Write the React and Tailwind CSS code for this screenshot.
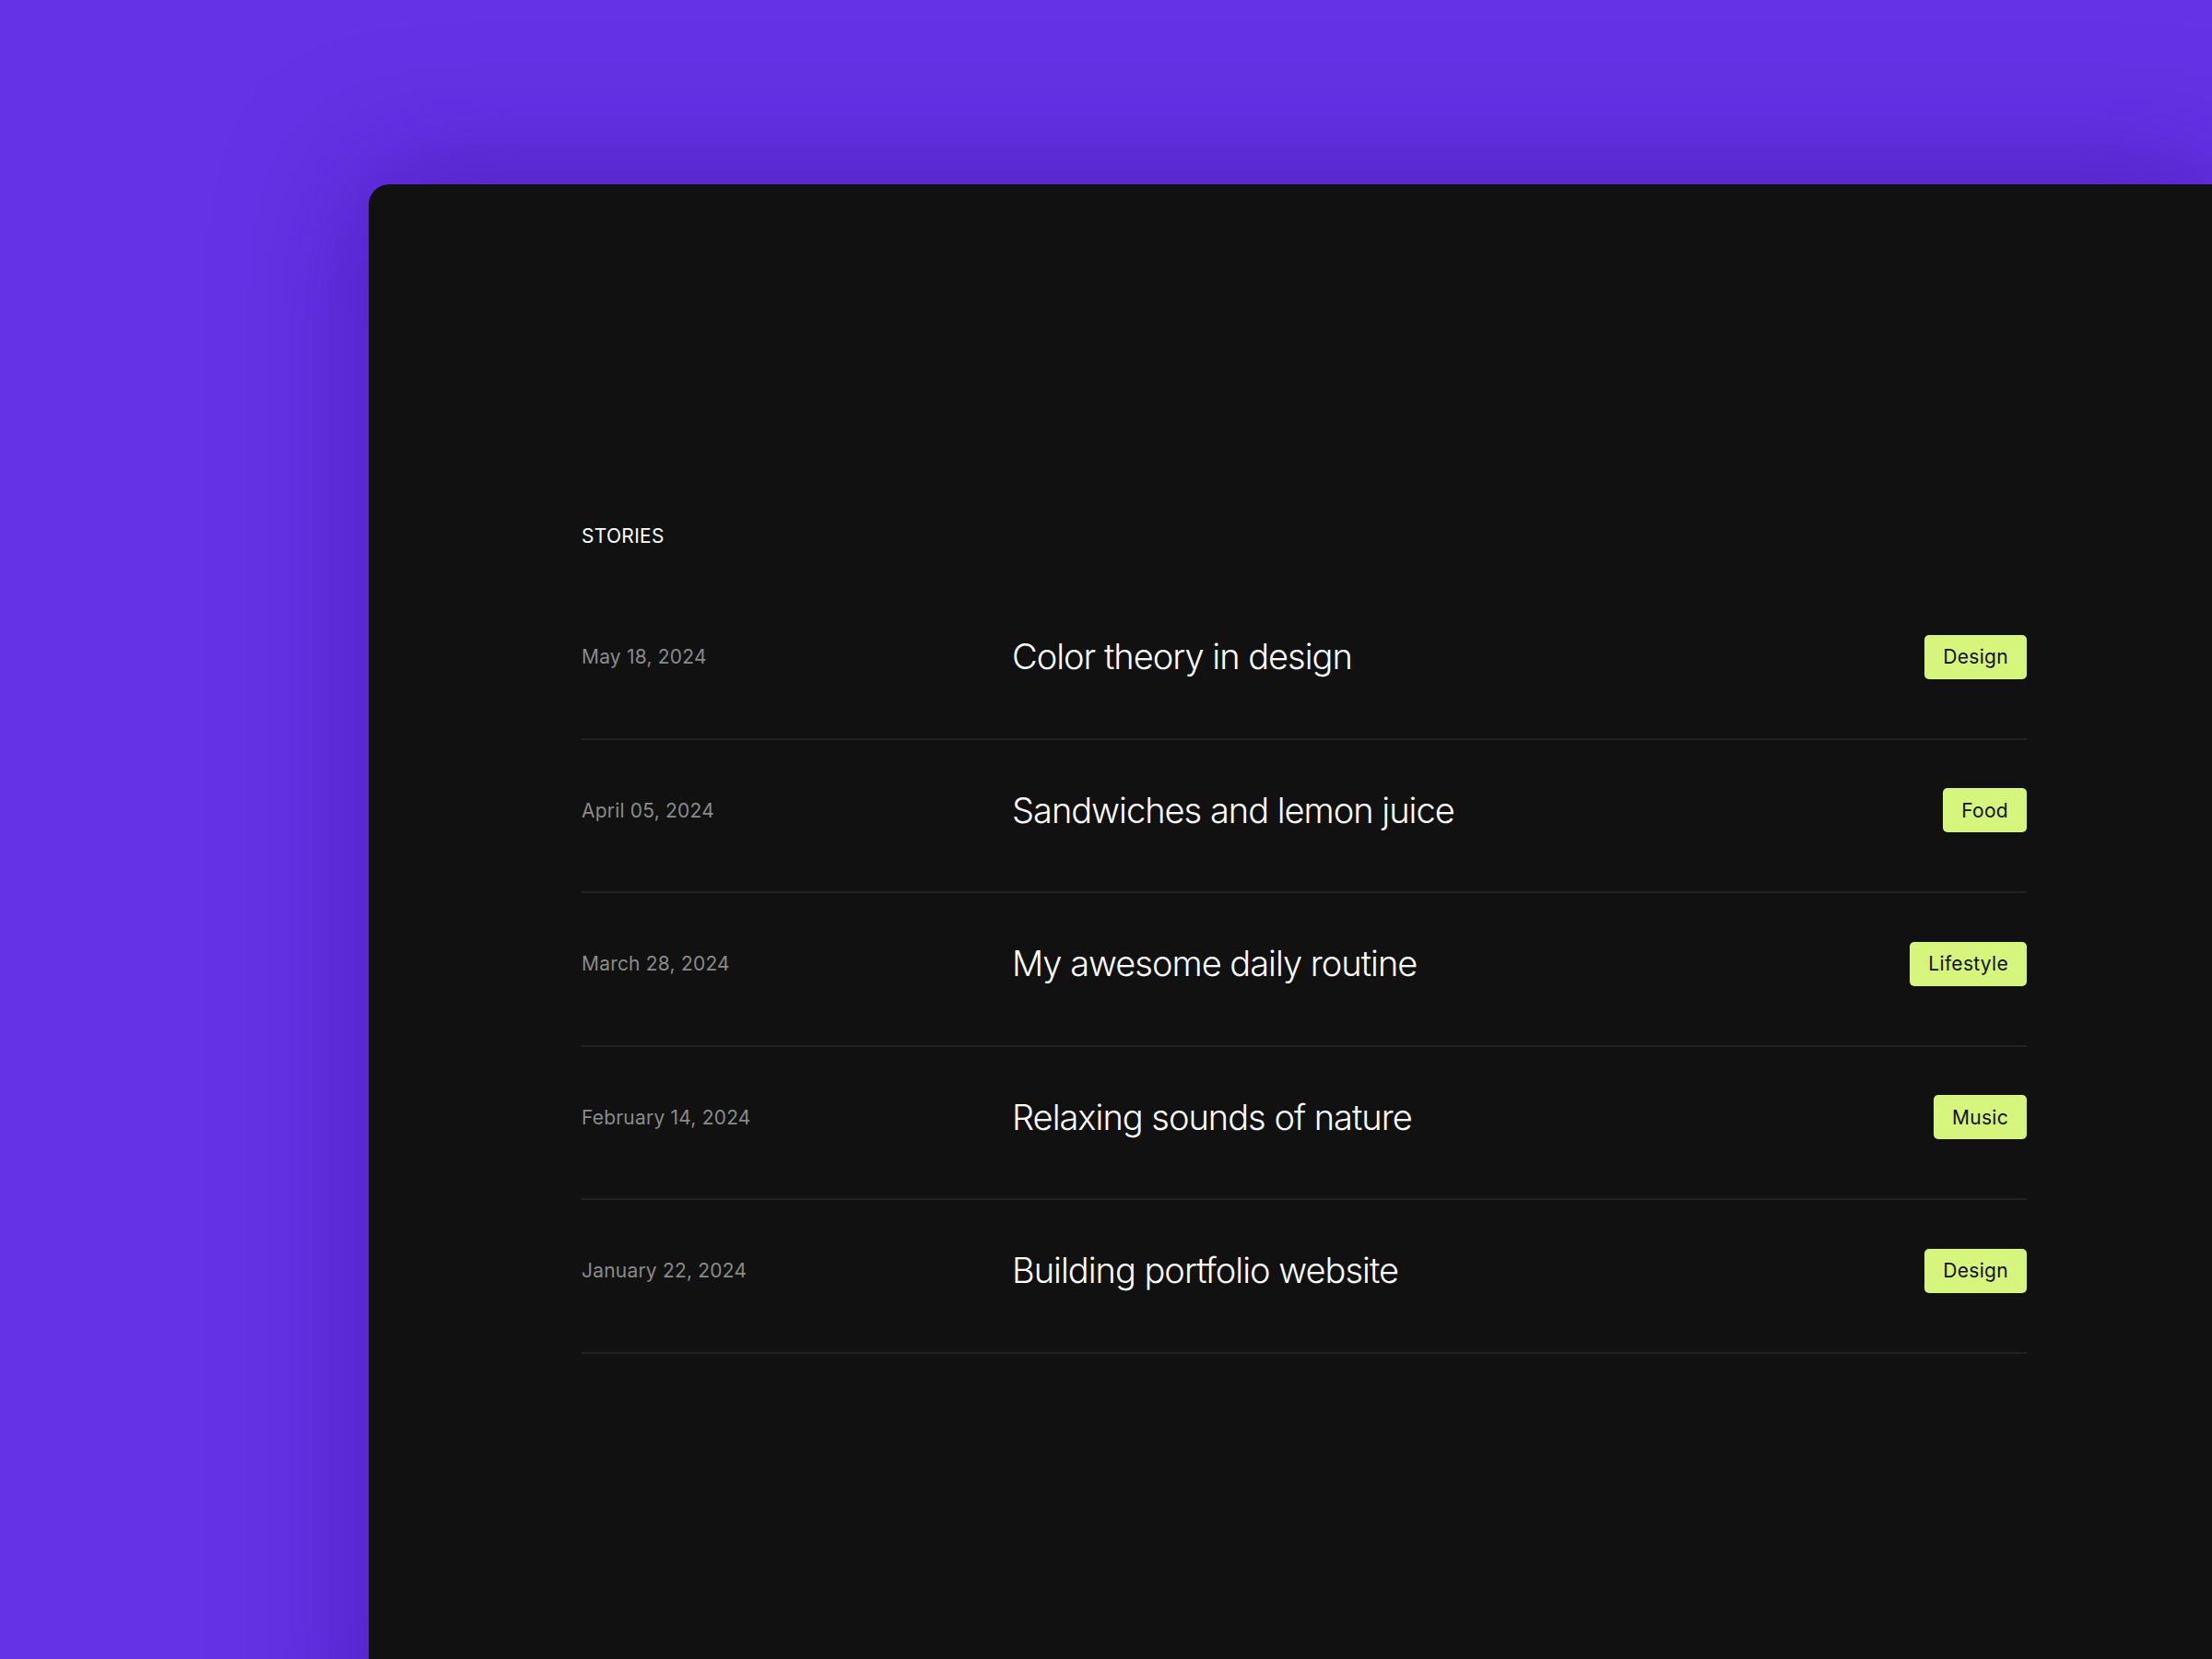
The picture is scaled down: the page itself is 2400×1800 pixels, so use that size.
import React from "react";

const stories = [
  { date: "May 18, 2024", title: "Color theory in design", tag: "Design" },
  { date: "April 05, 2024", title: "Sandwiches and lemon juice", tag: "Food" },
  { date: "March 28, 2024", title: "My awesome daily routine", tag: "Lifestyle" },
  { date: "February 14, 2024", title: "Relaxing sounds of nature", tag: "Music" },
  { date: "January 22, 2024", title: "Building portfolio website", tag: "Design" },
];

export default function App() {
  return (
    <div
      className="w-[2400px] h-[1800px] overflow-hidden bg-[#6533e5] pt-[200px] pl-[400px]"
      style={{ fontFamily: "Inter, 'Noto Sans', sans-serif" }}
    >
      <div className="h-[1700px] bg-[#111111] rounded-tl-[22px] shadow-[0_0_140px_20px_rgba(60,10,150,0.45)] pl-[231px] pt-[366px]">
        <div className="w-[1568px]">
          <div className="text-[21px] leading-[32px] text-white tracking-[0.3px] mb-[38px]">STORIES</div>
          {stories.map((s, i) => (
            <div
              key={i}
              className="h-[166.5px] pb-[11px] border-b-[2px] border-[#222222] flex items-center"
            >
              <div className="w-[467px] text-[21px] text-[#8a8a8a] tracking-[0.2px]">{s.date}</div>
              <div className="flex-1 text-[38px] text-white font-light tracking-[-1px]">{s.title}</div>
              <div className="h-[48px] px-[20px] flex items-center rounded-[5px] bg-[#d5f57c] text-[#111111] text-[21px] tracking-[0.3px]">
                {s.tag}
              </div>
            </div>
          ))}
        </div>
      </div>
    </div>
  );
}
